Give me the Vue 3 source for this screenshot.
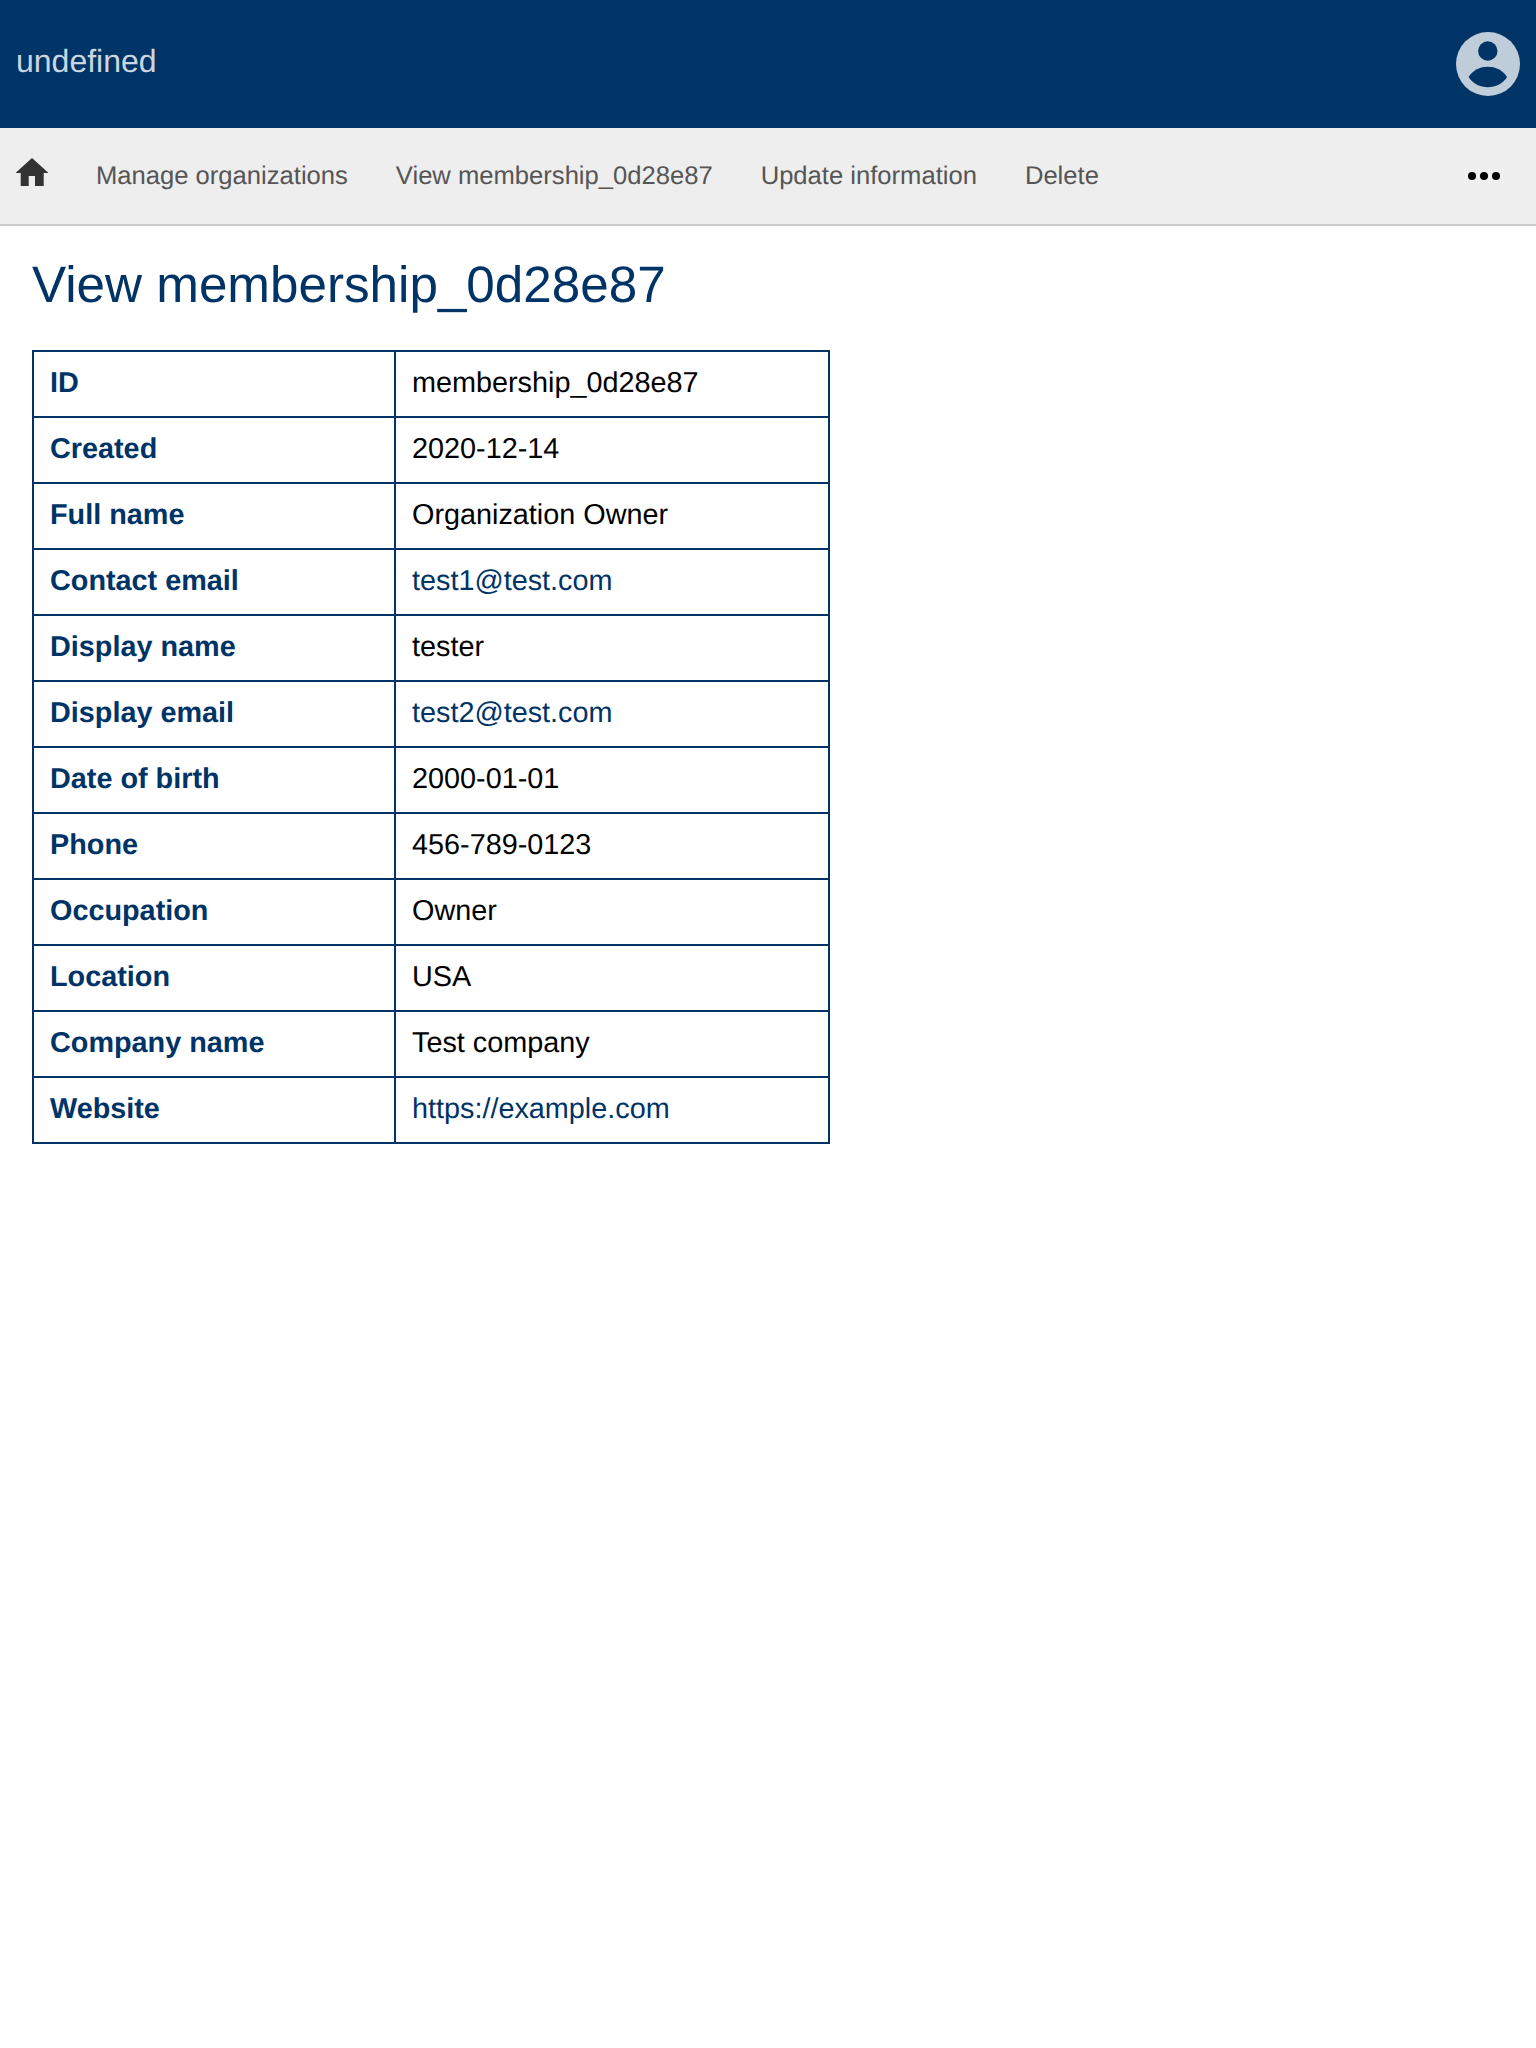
<script setup>
const rows = [
    { label: "ID", value: "membership_0d28e87" },
    { label: "Created", value: "2020-12-14" },
    { label: "Full name", value: "Organization Owner" },
    { label: "Contact email", value: "test1@test.com", href: "mailto:test1@test.com" },
    { label: "Display name", value: "tester" },
    { label: "Display email", value: "test2@test.com", href: "mailto:test2@test.com" },
    { label: "Date of birth", value: "2000-01-01" },
    { label: "Phone", value: "456-789-0123" },
    { label: "Occupation", value: "Owner" },
    { label: "Location", value: "USA" },
    { label: "Company name", value: "Test company" },
    { label: "Website", value: "https://example.com", href: "https://example.com" },
];

const navLinks = ["Manage organizations", "View membership_0d28e87", "Update information", "Delete"];
</script>

<template>
    <div class="page">
        <header class="topbar">
            <span class="site-name">undefined</span>
            <svg class="avatar" viewBox="0 0 64 64" aria-hidden="true">
                <circle cx="32" cy="32" r="32" fill="#bfccd9" />
                <circle cx="31.8" cy="19" r="9.7" fill="#003366" />
                <path d="M12.6 45 C17 38 24 34.8 31.8 34.8 C39.6 34.8 46.6 38 51 45 C46.6 52 39.6 55.2 31.8 55.2 C24 55.2 17 52 12.6 45 Z" fill="#003366" />
            </svg>
        </header>

        <nav class="navbar">
            <a class="nav-home" href="#" aria-label="Home">
                <svg viewBox="0 0 32 28" width="32" height="28" aria-hidden="true">
                    <path d="M16 0 L32 14.5 L32 15 L27.7 15 L27.7 28 L19 28 L19 18 L12.7 18 L12.7 28 L4.7 28 L4.7 15 L0 15 L0 14.5 Z" fill="#333" />
                </svg>
            </a>
            <a v-for="link in navLinks" :key="link" class="nav-link" href="#">{{ link }}</a>
            <button class="nav-more" type="button" aria-label="More">
                <i></i><i></i><i></i>
            </button>
        </nav>

        <main class="content">
            <h1>View membership_0d28e87</h1>
            <table class="details">
                <tbody>
                    <tr v-for="row in rows" :key="row.label">
                        <th>{{ row.label }}</th>
                        <td>
                            <a v-if="row.href" :href="row.href">{{ row.value }}</a>
                            <template v-else>{{ row.value }}</template>
                        </td>
                    </tr>
                </tbody>
            </table>
        </main>
    </div>
</template>

<style>
body {
    background: #fff;
}
</style>

<style scoped>
.page {
    font-family: "Liberation Sans", Arial, sans-serif;
    color: #000;
    text-rendering: geometricPrecision;
}

.topbar {
    display: flex;
    align-items: center;
    justify-content: space-between;
    height: 128px;
    padding: 0 16px;
    box-sizing: border-box;
    background: #003366;
}

.site-name {
    font-size: 32px;
    color: #ccd6e0;
    margin-bottom: 6px;
}

.avatar {
    width: 64px;
    height: 64px;
}

.navbar {
    display: flex;
    align-items: center;
    height: 98px;
    box-sizing: border-box;
    padding-left: 16px;
    background: #eee;
    border-bottom: 2px solid #ccc;
}

.nav-home {
    display: flex;
    width: 32px;
    margin-right: 24px;
    margin-bottom: 8px;
}

.nav-link {
    padding: 0 24px;
    font-size: 25.6px;
    color: #555;
    text-decoration: none;
}

.nav-more {
    display: flex;
    gap: 4px;
    margin-left: auto;
    margin-right: 36px;
    padding: 0;
    border: 0;
    background: none;
}

.nav-more i {
    display: block;
    width: 8px;
    height: 8px;
    border-radius: 50%;
    background: #000;
}

.content {
    padding: 0 32px;
}

h1 {
    margin: 29px 0 35px;
    font-size: 51.2px;
    font-weight: 400;
    line-height: 60px;
    color: #003366;
}

.details {
    width: 798px;
    border-collapse: collapse;
    font-size: 28.8px;
}

.details th,
.details td {
    height: 66px;
    padding: 0 16px 2px;
    box-sizing: border-box;
    border: 2px solid #003366;
    text-align: left;
    vertical-align: middle;
}

.details th {
    width: 362px;
    color: #003366;
    font-weight: 700;
}

.details a {
    color: #003366;
    text-decoration: none;
}
</style>
